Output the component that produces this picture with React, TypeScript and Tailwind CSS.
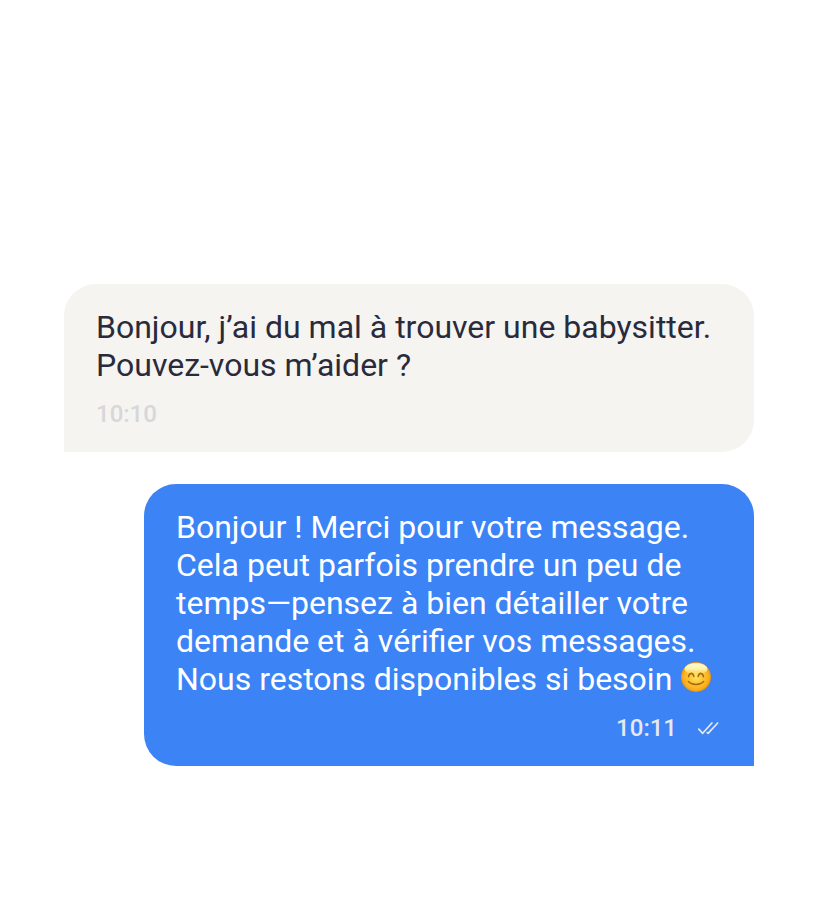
import type { ReactNode } from "react";

const SmileEmoji = () => (
  <svg
    viewBox="0 0 32 32"
    role="img"
    aria-label="sourire"
    className="inline-block size-8 align-[-3px]"
  >
    <defs>
      <radialGradient id="face" cx="0.5" cy="0.5" r="0.52">
        <stop offset="0" stopColor="#ffe765" />
        <stop offset="0.35" stopColor="#fdcb3c" />
        <stop offset="0.8" stopColor="#f9b021" />
        <stop offset="0.93" stopColor="#ef990f" />
        <stop offset="1" stopColor="#cf7a10" />
      </radialGradient>
      <linearGradient id="shine" x1="0" y1="0" x2="0" y2="1">
        <stop offset="0" stopColor="#fdf6d8" />
        <stop offset="0.5" stopColor="#fff3a8" />
        <stop offset="1" stopColor="#ffe36e" stopOpacity="0.3" />
      </linearGradient>
    </defs>
    <circle cx="16" cy="16" r="15" fill="url(#face)" />
    <ellipse cx="16" cy="8" rx="11.5" ry="6" fill="url(#shine)" />
    <g fill="none" stroke="#a8680f" strokeWidth="1.6" strokeLinecap="round">
      <path d="M8.600 15.600c.6-4.200 4.300-4.200 5.200-.2" />
      <path d="M18.200 15.400c.9-4 4.600-4 5.200.2" />
      <path d="M8.400 20.600c3.300 3.800 11.900 3.800 15.200 0" />
    </g>
    <path d="M10 21.600c3.500 1.800 8.500 1.800 12 0-2.600 3.200-9.400 3.200-12 0z" fill="#a8680f" />
  </svg>
);

const DoubleCheck = () => (
  <svg
    viewBox="0 0 24 24"
    className="size-6"
    fill="none"
    stroke="currentColor"
    strokeWidth="1.7"
    strokeLinecap="round"
    strokeLinejoin="round"
    aria-hidden="true"
  >
    <path d="M.8 13.200l3.900 4.100L13.900 7" />
    <path d="M9.200 16.600l.9.700L19.700 7" />
  </svg>
);

type BubbleProps = {
  time: string;
  mine?: boolean;
  children: ReactNode;
};

const Bubble = ({ time, mine, children }: BubbleProps) => (
  <li
    className={`flex flex-col gap-4 rounded-4xl px-8 py-6 ${
      mine
        ? "ml-20 rounded-br-none bg-[#3c83f6] text-white"
        : "rounded-bl-none bg-[#f5f4f0] text-[#292b3d]"
    }`}
  >
    <p className="text-[32px] leading-[38px]">{children}</p>
    <div
      className={`flex items-center gap-[21px] text-2xl leading-7 font-medium ${
        mine ? "justify-end text-[#e6e8ec]" : "text-[#d7d7da]"
      }`}
    >
      <time>{time}</time>
      {mine && <DoubleCheck />}
    </div>
  </li>
);

export default function App() {
  return (
    <main className="min-h-screen bg-white pt-71 pr-[78px] pb-32 pl-16 font-[Roboto,sans-serif]">
      <ul className="flex flex-col gap-8">
        <Bubble time="10:10">
          Bonjour, j’ai du mal à trouver une babysitter. Pouvez-vous m’aider ?
        </Bubble>
        <Bubble time="10:11" mine>
          Bonjour ! Merci pour votre message. Cela peut parfois prendre un peu
          de temps—pensez à bien détailler votre demande et à vérifier vos
          messages. Nous restons disponibles si besoin <SmileEmoji />
        </Bubble>
      </ul>
    </main>
  );
}
